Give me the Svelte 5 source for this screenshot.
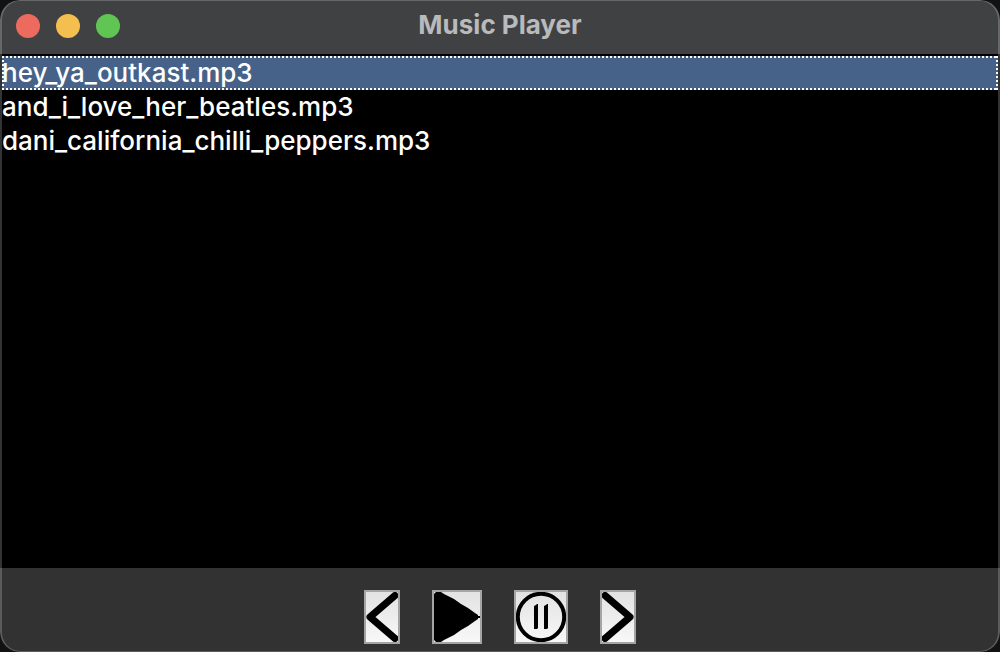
<script>
  const songs = ['hey_ya_outkast.mp3', 'and_i_love_her_beatles.mp3', 'dani_california_chilli_peppers.mp3'];
  let current = $state(0);
  let playing = $state(false);

  function step(by) {
    current = (current + by + songs.length) % songs.length;
  }
</script>

<div class="window">
  <header class="titlebar">
    <div class="lights">
      <button class="light close" aria-label="Close"></button>
      <button class="light minimize" aria-label="Minimize"></button>
      <button class="light zoom" aria-label="Zoom"></button>
    </div>
    <h1>Music Player</h1>
  </header>

  <ul class="playlist">
    {#each songs as song, i}
      <li>
        <button class="song" class:selected={i === current} aria-pressed={i === current} onclick={() => (current = i)}>{song}</button>
      </li>
    {/each}
  </ul>

  <footer class="controls">
    <button class="control" aria-label="Previous" onclick={() => step(-1)}>
      <svg width="32" height="50" viewBox="0 0 32 50">
        <path d="M29 3.500 4 25 29 46.500" fill="none" stroke="#000" stroke-width="7" stroke-linecap="round" stroke-linejoin="round" />
      </svg>
    </button>
    <button class="control" aria-label="Play" onclick={() => (playing = true)}>
      <svg width="46" height="50" viewBox="0 0 46 50">
        <path d="M0 2 2 0H7L10 2 20 7 27 12 34 16 41 21 44 23V24H46V26H44V27L41 29 34 34 27 38 20 43 10 48 7 50H2L0 48Z" />
      </svg>
    </button>
    <button class="control" aria-label="Pause" onclick={() => (playing = false)}>
      <svg width="50" height="50" viewBox="0 0 50 50">
        <circle cx="25" cy="25" r="23.2" fill="none" stroke="#000" stroke-width="4" />
        <path d="M18 14 20 13 21 12H22V36L21 37H18ZM28 14 30 13 31 12H32V36L31 37H28Z" />
      </svg>
    </button>
    <button class="control" aria-label="Next" onclick={() => step(1)}>
      <svg width="32" height="50" viewBox="0 0 32 50">
        <path d="M3 3.500 28 25 3 46.500" fill="none" stroke="#000" stroke-width="7" stroke-linecap="round" stroke-linejoin="round" />
      </svg>
    </button>
  </footer>
</div>

<style>
  :global(body) {
    margin: 0;
    background: #111214;
  }

  .window {
    position: relative;
    box-sizing: border-box;
    min-height: 100vh;
    display: flex;
    flex-direction: column;
    overflow: hidden;
    border-radius: 20px;
    background: #000;
    font-family: Inter, "Liberation Sans", sans-serif;
  }

  .window::after {
    content: "";
    position: absolute;
    inset: 0;
    border: 2px solid rgb(255 255 255 / 0.2);
    border-top-width: 1px;
    border-bottom-width: 1px;
    border-radius: 20px;
    pointer-events: none;
  }

  button {
    margin: 0;
    padding: 0;
    border: 0;
    font: inherit;
  }

  .titlebar {
    display: grid;
    grid-template-columns: 1fr auto 1fr;
    align-items: center;
    height: 52px;
    padding: 0 16px 2px;
    background: #404142;
  }

  .lights {
    display: flex;
    gap: 16px;
  }

  .light {
    width: 24px;
    height: 24px;
    border-radius: 50%;
  }

  .close {
    background: #ed6a5e;
  }

  .minimize {
    background: #f5bf4f;
  }

  .zoom {
    background: #61c554;
  }

  h1 {
    margin: 0;
    color: #b9babb;
    font-size: 26px;
    font-weight: 700;
    line-height: 30px;
    padding-bottom: 2px;
  }

  .playlist {
    flex: 1;
    margin: 0;
    padding: 2px 2px 0;
    list-style: none;
  }

  .song {
    display: block;
    width: 100%;
    background: transparent;
    color: #fff;
    font-size: 26px;
    font-weight: 500;
    line-height: 34px;
    text-align: left;
  }

  .selected {
    background:
      repeating-linear-gradient(90deg, #fff 0 2px, transparent 2px 4px) top / 100% 2px no-repeat,
      repeating-linear-gradient(90deg, #fff 0 2px, transparent 2px 4px) bottom / 100% 2px no-repeat,
      repeating-linear-gradient(#fff 0 2px, transparent 2px 4px) left / 2px 100% no-repeat,
      repeating-linear-gradient(#fff 0 2px, transparent 2px 4px) right / 2px 100% no-repeat,
      #476288;
  }

  .controls {
    display: flex;
    justify-content: center;
    gap: 32px;
    padding: 22px 16px 8px;
    background: #323232;
  }

  .control {
    display: flex;
    border: 2px solid #a5a5a5;
    background: linear-gradient(#e2e2e2, #f8f8f8);
  }

  .control svg {
    display: block;
  }
</style>
